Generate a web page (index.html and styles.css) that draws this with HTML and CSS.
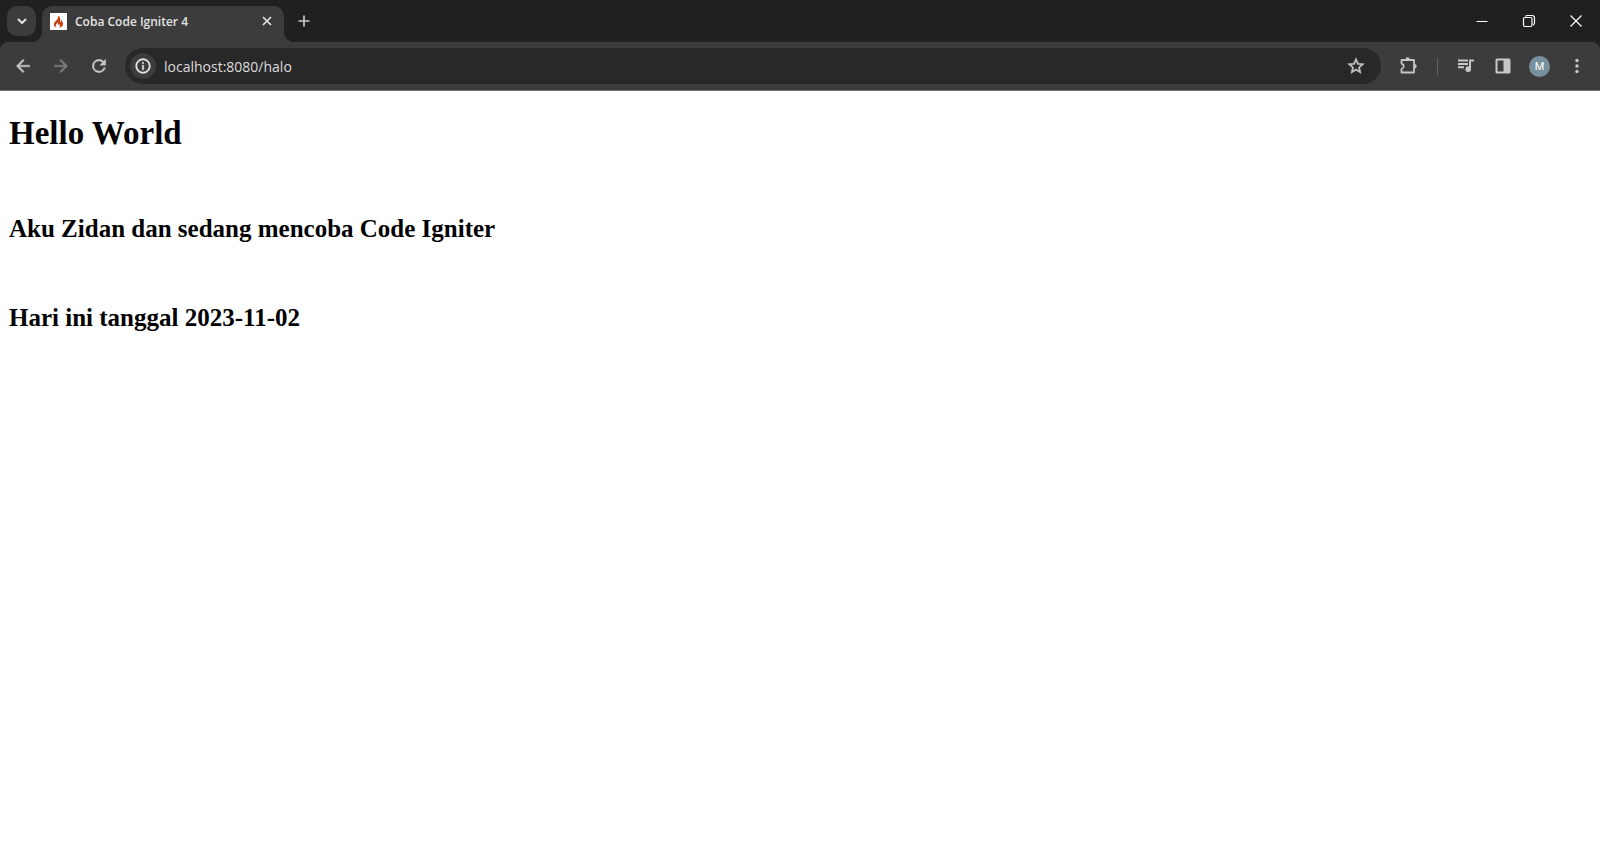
FILE: index.html
```
<!DOCTYPE html>
<html lang="id">
<head>
    <meta charset="UTF-8">
    <title>Coba Code Igniter 4</title>
    <link rel="stylesheet" href="styles.css">
</head>
<body>
    <header class="browser">
        <!-- Tab strip -->
        <div class="tab-strip">
            <button class="tab-search" aria-label="Search tabs">
                <svg width="20" height="20" viewBox="0 0 20 20"><path d="M6 8l4 4 4-4" fill="none" stroke="currentColor" stroke-width="2"/></svg>
            </button>
            <div class="tab">
                <span class="favicon">
                    <svg width="17" height="17" viewBox="0 0 17 17"><path d="M7.600 2.500c1 1.700.5 2.700-.5 3.900L5.300 8.600C4.300 9.800 3.700 10.600 3.900 11.900c.2 1.300 1.200 2.300 2.600 2.700-.9-.9-1.100-1.900-.5-2.900.5-.7 1.200-1.200 1.200-2.300 1 .7 1.200 1.700.8 2.700.6 0 1-.4 1.100-1 1.100 1 1.100 2.500 0 3.500 2.300-.4 3.900-1.700 4-3.700 0-1.600-1.300-2.500-1.500-4.200-.7.600-.9 1.400-.5 2.400-.9-.1-1.300-.7-1-1.600C10.600 5.400 9.900 3.600 7.600 2.500z" fill="#c8410f"/></svg>
                </span>
                <span class="tab-title">Coba Code Igniter 4</span>
                <button class="tab-close" aria-label="Close tab">
                    <svg width="16" height="16" viewBox="0 0 16 16"><path d="M4 4l8 8M12 4l-8 8" stroke="currentColor" stroke-width="1.700"/></svg>
                </button>
            </div>
            <button class="new-tab" aria-label="New tab">
                <svg width="20" height="20" viewBox="0 0 20 20"><path d="M10 4.500v11M4.500 10h11" stroke="currentColor" stroke-width="1.700"/></svg>
            </button>
            <div class="window-controls">
                <button aria-label="Minimize">
                    <svg width="16" height="16" viewBox="0 0 16 16"><path d="M2.500 8.500h11" stroke="currentColor"/></svg>
                </button>
                <button aria-label="Restore">
                    <svg width="16" height="16" viewBox="0 0 16 16"><g fill="none" stroke="currentColor" stroke-width="1.200"><rect x="2.500" y="4.500" width="8.500" height="9" rx="1.500"/><path d="M4.500 3.500q.5-1 1.500-1h5q2.500 0 2.500 2.500v5q0 1.500-1.500 2"/></g></svg>
                </button>
                <button aria-label="Close">
                    <svg width="16" height="16" viewBox="0 0 16 16"><path d="M2.500 2.500l11 11M13.500 2.500l-11 11" stroke="currentColor" stroke-width="1.200"/></svg>
                </button>
            </div>
        </div>

        <!-- Toolbar -->
        <div class="toolbar">
            <button class="tool" aria-label="Back">
                <svg width="20" height="20" viewBox="0 0 24 24"><path class="bold" d="M20 11H7.830l5.590-5.590L12 4l-8 8 8 8 1.410-1.410L7.830 13H20v-2z"/></svg>
            </button>
            <button class="tool" aria-label="Forward" disabled>
                <svg width="20" height="20" viewBox="0 0 24 24"><path class="bold" d="M12 4l-1.410 1.410L16.170 11H4v2h12.170l-5.580 5.590L12 20l8-8z"/></svg>
            </button>
            <button class="tool" aria-label="Reload">
                <svg width="20" height="20" viewBox="0 0 24 24"><path class="bold" d="M17.650 6.350A7.960 7.960 0 0 0 12 4a8 8 0 1 0 7.730 10h-2.080A6 6 0 1 1 12 6c1.660 0 3.140.690 4.220 1.780L13 11h7V4l-2.350 2.350z"/></svg>
            </button>
            <form class="address">
                <button type="button" class="site-info" aria-label="View site information">
                    <svg width="18" height="18" viewBox="0 0 24 24"><path class="bold" d="M11 7h2v2h-2zm0 4h2v6h-2zm1-9a10 10 0 1 0 0 20 10 10 0 0 0 0-20zm0 18a8 8 0 1 1 0-16 8 8 0 0 1 0 16z"/></svg>
                </button>
                <input type="text" aria-label="Address" value="localhost:8080/halo" spellcheck="false">
                <button type="button" class="bookmark" aria-label="Bookmark this tab">
                    <svg width="20" height="20" viewBox="0 0 24 24"><path class="bold" d="M22 9.240l-7.190-.620L12 2 9.190 8.630 2 9.240l5.460 4.730L5.820 21 12 17.270 18.180 21l-1.630-7.030L22 9.240zM12 15.400l-3.760 2.270 1-4.280-3.320-2.880 4.380-.380L12 6.100l1.710 4.040 4.380.380-3.320 2.880 1 4.280L12 15.400z"/></svg>
                </button>
            </form>
            <button class="tool" aria-label="Extensions">
                <svg width="20" height="20" viewBox="0 0 20 20"><path d="M2.500 4H15v12.500H2.500V13q2.200-.7 2.200-2.700T2.500 7.600z" fill="none" stroke="currentColor" stroke-width="1.800" stroke-linejoin="round"/><path d="M6.500 3.500a2.200 2.200 0 0 1 4.400 0zM15.500 8a2.200 2.200 0 0 1 0 4.400z"/></svg>
            </button>
            <span class="divider"></span>
            <button class="tool" aria-label="Media controls">
                <svg width="20" height="20" viewBox="0 0 20 20"><path d="M2 3.500h10v2H2zM2 6.900h10v2H2zM2 10.300h6v2H2zM13 3.500h5v2h-3v7.600a2.800 2.800 0 1 1-2-2.600z"/></svg>
            </button>
            <button class="tool" aria-label="Side panel">
                <svg width="20" height="20" viewBox="0 0 20 20"><path d="M4 2.500h12q1.500 0 1.500 1.500v12q0 1.500-1.500 1.500H4q-1.500 0-1.500-1.500V4q0-1.500 1.500-1.500zM4.500 4.500v11h6v-11z" fill-rule="evenodd"/></svg>
            </button>
            <button class="tool" aria-label="Profile"><span class="avatar">M</span></button>
            <button class="tool" aria-label="Menu">
                <svg width="20" height="20" viewBox="0 0 20 20"><circle cx="10" cy="4.500" r="1.700"/><circle cx="10" cy="10" r="1.700"/><circle cx="10" cy="15.500" r="1.700"/></svg>
            </button>
        </div>
    </header>

    <!-- Page content -->
    <main>
        <h1>Hello World</h1>
        <h2>Aku Zidan dan sedang mencoba Code Igniter</h2>
        <h2>Hari ini tanggal 2023-11-02</h2>
    </main>
</body>
</html>
```
FILE: styles.css
```
* {
    box-sizing: border-box;
}

body {
    margin: 0;
    background-color: #fff;
    color: #000;
    font-family: "Liberation Serif", "Times New Roman", serif;
}

button {
    display: flex;
    align-items: center;
    justify-content: center;
    padding: 0;
    border: none;
    background: none;
    color: #c7c7c7;
    font-family: inherit;
}

svg {
    display: block;
    fill: currentColor;
}

/* Slightly heavier icon strokes */
.bold {
    stroke: currentColor;
    stroke-width: 0.5;
}

.browser {
    background-color: #1f2120;
    font-family: "Open Sans", "Noto Sans", sans-serif;
}

/* Tab strip */
.tab-strip {
    display: flex;
    align-items: flex-start;
    height: 42px;
    padding: 6px 0 0 7px;
}

.tab-search {
    width: 29px;
    height: 30px;
    margin-right: 6px;
    border-radius: 10px;
    background-color: #3c3c3c;
    color: #e3e3e3;
}

.tab {
    position: relative;
    display: flex;
    align-items: center;
    width: 242px;
    height: 36px;
    padding: 0 8px 6px;
    border-radius: 10px 10px 0 0;
    background-color: #3c3c3c;
}

/* Flared bottom corners of the active tab */
.tab::before,
.tab::after {
    content: "";
    position: absolute;
    bottom: 0;
    width: 10px;
    height: 10px;
}

.tab::before {
    left: -10px;
    background: radial-gradient(circle at 0 0, transparent 10px, #3c3c3c 10px);
}

.tab::after {
    right: -10px;
    background: radial-gradient(circle at 100% 0, transparent 10px, #3c3c3c 10px);
}

.favicon {
    width: 17px;
    height: 17px;
    background-color: #fff;
}

.tab-title {
    flex: 1;
    margin-left: 8px;
    color: #e3e3e3;
    font-size: 12px;
    font-weight: 600;
    white-space: nowrap;
}

.tab-close {
    width: 18px;
    height: 18px;
    color: #e3e3e3;
}

.new-tab {
    width: 30px;
    height: 30px;
    margin-left: 5px;
}

.window-controls {
    display: flex;
    margin-left: auto;
    padding-right: 1px;
}

.window-controls button {
    width: 47px;
    height: 29px;
    color: #fff;
}

/* Toolbar */
.toolbar {
    display: flex;
    align-items: center;
    height: 49px;
    padding: 0 5px 0 4px;
    border-bottom: 1px solid #757272;
    border-radius: 8px 8px 0 0;
    background-color: #3c3c3c;
}

.tool {
    width: 38px;
    height: 34px;
}

.tool:disabled {
    color: #7c7c7c;
}

.address {
    display: flex;
    flex: 1;
    align-items: center;
    height: 36px;
    margin: 0 9px 0 7px;
    padding: 0 15px 0 5px;
    border-radius: 18px;
    background-color: #282828;
}

.site-info {
    width: 26px;
    height: 26px;
    border-radius: 50%;
    background-color: #3c3c3c;
    color: #e3e3e3;
}

.address input {
    flex: 1;
    min-width: 0;
    margin-left: 8px;
    padding: 0;
    border: none;
    outline: none;
    background: none;
    color: #dcdcdc;
    font-family: inherit;
    font-size: 14px;
}

.divider {
    width: 1px;
    height: 17px;
    margin: 0 9px;
    background-color: #636363;
}

/* Icons right of the divider sit a little closer together */
.divider ~ .tool {
    width: 37px;
}

.avatar {
    width: 21px;
    height: 21px;
    border-radius: 50%;
    background-color: #78909c;
    color: #fff;
    font-family: Roboto, sans-serif;
    font-size: 11px;
    line-height: 21px;
    text-align: center;
}

/* Page content */
main {
    padding: 0 9px;
}

h1 {
    margin: 23px 0 63px;
    font-size: 33px;
    line-height: 38px;
}

h2 {
    margin: 0 0 61px;
    font-size: 25px;
    line-height: 28px;
}
```
